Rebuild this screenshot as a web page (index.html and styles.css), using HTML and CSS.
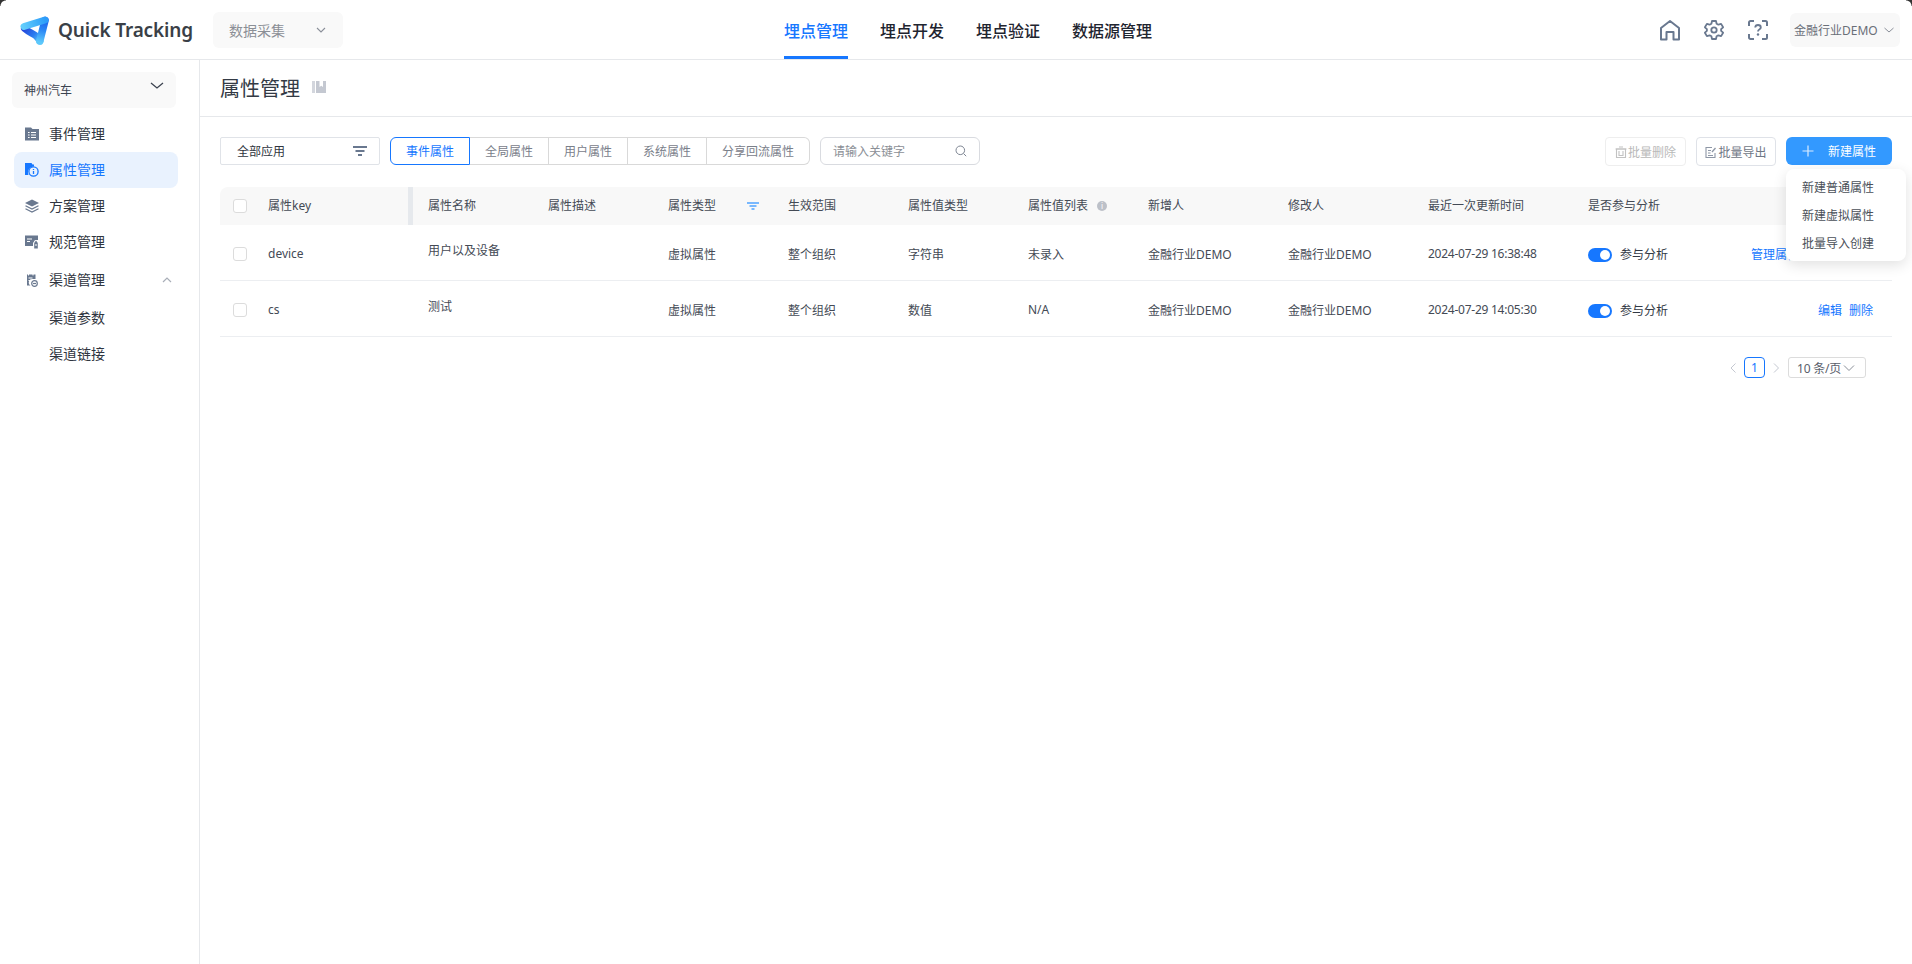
FILE: index.html
```html
<!DOCTYPE html>
<html lang="zh-CN">
<head>
<meta charset="utf-8">
<title>属性管理 - Quick Tracking</title>
<link rel="stylesheet" href="styles.css">
</head>
<body>
<header class="topbar">
  <div class="brand">
    <svg class="logo" viewBox="0 0 30 30" width="30" height="30">
      <defs>
        <linearGradient id="lg1" gradientUnits="userSpaceOnUse" x1="3" y1="12" x2="26" y2="5"><stop offset="0" stop-color="#62cdfb"/><stop offset="1" stop-color="#2c9cf9"/></linearGradient>
        <linearGradient id="lg2" gradientUnits="userSpaceOnUse" x1="25" y1="5" x2="20" y2="27"><stop offset="0" stop-color="#1f62ea"/><stop offset=".45" stop-color="#2a86f5"/><stop offset="1" stop-color="#5cc8fb"/></linearGradient>
        <linearGradient id="lg3" gradientUnits="userSpaceOnUse" x1="4" y1="12" x2="20" y2="26"><stop offset="0" stop-color="#2540d8"/><stop offset=".6" stop-color="#2b7df0"/><stop offset="1" stop-color="#5cc8fb"/></linearGradient>
      </defs>
      <path d="M4.500 13.500C9 17.500 13 18.500 15.500 20.500C17.500 22 18.500 24 20 26" fill="none" stroke="url(#lg3)" stroke-width="7" stroke-linecap="round"/>
      <path d="M25 5.500L19.800 26" fill="none" stroke="url(#lg2)" stroke-width="7.500" stroke-linecap="round"/>
      <path d="M4 11.500L25 5" fill="none" stroke="url(#lg1)" stroke-width="7" stroke-linecap="round"/>
    </svg>
    <span class="brand-name">Quick Tracking</span>
  </div>
  <div class="module-select">
    <span>数据采集</span>
    <svg class="chev" viewBox="0 0 12 12" width="12" height="12"><path d="M2 4l4 4 4-4" fill="none" stroke="#8a8f99" stroke-width="1.100"/></svg>
  </div>
  <nav class="topnav">
    <a class="topnav-item is-active">埋点管理</a>
    <a class="topnav-item">埋点开发</a>
    <a class="topnav-item">埋点验证</a>
    <a class="topnav-item">数据源管理</a>
  </nav>
  <div class="top-actions">
    <svg class="top-icon" viewBox="0 0 22 22" width="22" height="22"><path d="M2 20.500V9L11 2l9 7v11.500h-5.500V13h-7v7.500Z" fill="none" stroke="#69788f" stroke-width="2" stroke-linejoin="round"/></svg>
    <svg class="top-icon" viewBox="0 0 22 22" width="22" height="22"><path d="M9 2h4l.6 2.700 1.800 1 2.700-.8 2 3.400-2 1.900v1.600l2 1.900-2 3.400-2.700-.8-1.800 1L13 20H9l-.6-2.700-1.800-1-2.700.8-2-3.400 2-1.900v-1.600l-2-1.900 2-3.400 2.700.8 1.800-1Z" fill="none" stroke="#69788f" stroke-width="1.800" stroke-linejoin="round"/><circle cx="11" cy="11" r="2.700" fill="none" stroke="#69788f" stroke-width="1.800"/></svg>
    <svg class="top-icon top-icon-last" viewBox="0 0 22 22" width="22" height="22"><path d="M2 7V3.500C2 2.700 2.700 2 3.500 2H7M15 2h3.500c.8 0 1.500.7 1.500 1.500V7M20 15v3.500c0 .8-.7 1.500-1.500 1.500H15M7 20H3.500C2.700 20 2 19.300 2 18.500V15" fill="none" stroke="#69788f" stroke-width="2"/><path d="M8.200 8.500C8.300 6.900 9.500 6 11 6c1.600 0 2.800 1 2.800 2.400 0 2-2.800 2-2.800 4.100" fill="none" stroke="#69788f" stroke-width="1.800"/><circle cx="11" cy="15.500" r="1.200" fill="#69788f"/></svg>
    <div class="user-select">
      <span>金融行业DEMO</span>
      <svg class="chev" viewBox="0 0 12 12" width="12" height="12"><path d="M1.500 4l4.500 4 4.500-4" fill="none" stroke="#8a8f99" stroke-width="1"/></svg>
    </div>
  </div>
</header>

<div class="shell">
  <aside class="sidebar">
    <div class="project-select">
      <span>神州汽车</span>
      <svg viewBox="0 0 14 14" width="14" height="14"><path d="M1 4l6 5 6-5" fill="none" stroke="#3c4350" stroke-width="1.300"/></svg>
    </div>
    <ul class="menu">
      <li class="menu-item">
        <svg class="menu-icon" viewBox="0 0 14 14" width="14" height="14"><path d="M0 .5h6l1.500 1.500H14v11.500H0Z" fill="#69788f"/><path d="M3 5.500h1.600M6 5.500h5M3 8h1.600M6 8h5M3 10.500h1.600M6 10.500h5" stroke="#fff" stroke-width="1.100"/></svg>
        <span>事件管理</span>
      </li>
      <li class="menu-item is-active">
        <svg class="menu-icon" viewBox="0 0 14 14" width="14" height="14"><path d="M0 0h6.500l1 1.500H9v2a6 6 0 0 0-5.500 8.500H0Z" fill="#1677ff"/><circle cx="8.500" cy="8.500" r="4.600" fill="none" stroke="#1677ff" stroke-width="1.300"/><path d="M8.500 6v.9M8.500 8v3" stroke="#1677ff" stroke-width="1.300"/></svg>
        <span>属性管理</span>
      </li>
      <li class="menu-item">
        <svg class="menu-icon" viewBox="0 0 14 14" width="14" height="14"><path d="M7 .5L14 4 7 7.500 0 4Z" fill="#69788f"/><path d="M.5 6.800L7 10l6.500-3.200M.5 9.800L7 13l6.500-3.200" fill="none" stroke="#69788f" stroke-width="1.200"/></svg>
        <span>方案管理</span>
      </li>
      <li class="menu-item">
        <svg class="menu-icon" viewBox="0 0 14 14" width="14" height="14"><path d="M0 .5h13V5h-3L8 8v3H0Z" fill="#69788f"/><path d="M2 4h5M2 6.500h3" stroke="#fff" stroke-width="1.100"/><path d="M11 5.500l1.800 2.500v5.500H9.200V8Z" fill="#69788f"/><path d="M11 9v2" stroke="#fff" stroke-width="1"/></svg>
        <span>规范管理</span>
      </li>
      <li class="menu-item menu-group">
        <svg class="menu-icon" viewBox="0 0 14 14" width="14" height="14"><path d="M2 1.500h8.500V6H7.500a3.500 3.500 0 0 0-2 6.500H2Z" fill="#69788f"/><path d="M3.500 .5v2M8 .5v2M3.500 5h4M3.500 7.500H6" stroke="#fff" stroke-width="1"/><circle cx="9.500" cy="10.500" r="2.800" fill="none" stroke="#69788f" stroke-width="1.200"/><path d="M8 10.500h3" stroke="#69788f" stroke-width="1.200"/></svg>
        <span>渠道管理</span>
        <svg class="menu-arrow" viewBox="0 0 10 10" width="10" height="10"><path d="M1 7l4-4 4 4" fill="none" stroke="#a9aeb8" stroke-width="1.200"/></svg>
      </li>
      <li class="menu-item is-sub"><span>渠道参数</span></li>
      <li class="menu-item is-sub"><span>渠道链接</span></li>
    </ul>
  </aside>

  <main class="content">
    <div class="page-head">
      <h1>属性管理</h1>
      <svg viewBox="0 0 14 14" width="14" height="14"><path d="M0 1h3v12H0Z" fill="#d3d6dd"/><path d="M4 1h3.500v6l1.700-1.300L11 7V1h3v12H4Z" fill="#c4c8d1"/></svg>
    </div>
    <div class="page-body">
      <div class="toolbar">
        <div class="app-select">
          <span>全部应用</span>
          <svg viewBox="0 0 14 10" width="14" height="10"><path d="M0 1h14M2.500 5h9M5 9h4" stroke="#69788f" stroke-width="1.800"/></svg>
        </div>
        <div class="tabs">
          <span class="tab is-active">事件属性</span>
          <span class="tab">全局属性</span>
          <span class="tab">用户属性</span>
          <span class="tab">系统属性</span>
          <span class="tab tab-wide">分享回流属性</span>
        </div>
        <div class="search">
          <span>请输入关键字</span>
          <svg viewBox="0 0 12 12" width="12" height="12"><circle cx="5.300" cy="5.300" r="4.300" fill="none" stroke="#7d8592" stroke-width="1"/><path d="M8.500 8.500L11.200 11.200" stroke="#7d8592" stroke-width="1"/></svg>
        </div>
        <div class="toolbar-right">
          <button class="btn is-disabled">
            <svg viewBox="0 0 12 12" width="12" height="12"><path d="M1.500 3h9v8.500h-9Z" fill="none" stroke="#c2c2c2" stroke-width="1.100"/><path d="M.5 3h11M4 1h4M4 5v4.500h4V5" fill="none" stroke="#c2c2c2" stroke-width="1.100"/></svg>
            批量删除
          </button>
          <button class="btn">
            <svg viewBox="0 0 12 12" width="12" height="12"><path d="M7 1.500H1v10h9V7M3 4.500h3M3 7h2.500M3 9.500h5" fill="none" stroke="#8e97a6" stroke-width="1.100"/><path d="M7 6l3.500-4" stroke="#8e97a6" stroke-width="1.400"/></svg>
            批量导出
          </button>
          <div class="create-wrap">
            <button class="btn-primary">
              <svg viewBox="0 0 12 12" width="12" height="12"><path d="M6 .5v11M.5 6h11" stroke="#d9ecff" stroke-width="1.200"/></svg>
              <span>新建属性</span>
            </button>
            <ul class="dropdown">
              <li>新建普通属性</li>
              <li>新建虚拟属性</li>
              <li>批量导入创建</li>
            </ul>
          </div>
        </div>
      </div>

      <div class="table">
        <div class="row row-head">
          <div class="cell cell-key"><i class="check"></i><span>属性key</span><b class="resizer"></b></div>
          <div class="cell">属性名称</div>
          <div class="cell">属性描述</div>
          <div class="cell cell-type">属性类型
            <svg viewBox="0 0 12 8" width="12" height="8"><path d="M0 1h12M2.500 4h7M4.500 7h3" stroke="#4da3ff" stroke-width="1.500"/></svg>
          </div>
          <div class="cell">生效范围</div>
          <div class="cell">属性值类型</div>
          <div class="cell cell-list">属性值列表 <i class="info">i</i></div>
          <div class="cell">新增人</div>
          <div class="cell">修改人</div>
          <div class="cell">最近一次更新时间</div>
          <div class="cell">是否参与分析</div>
          <div class="cell"></div>
        </div>
        <div class="row">
          <div class="cell cell-key"><i class="check"></i><span>device</span></div>
          <div class="cell cell-name">用户以及设备</div>
          <div class="cell"></div>
          <div class="cell">虚拟属性</div>
          <div class="cell">整个组织</div>
          <div class="cell">字符串</div>
          <div class="cell">未录入</div>
          <div class="cell">金融行业DEMO</div>
          <div class="cell">金融行业DEMO</div>
          <div class="cell cell-time">2024-07-29 16:38:48</div>
          <div class="cell cell-switch"><i class="switch"></i>参与分析</div>
          <div class="cell cell-actions"><a>管理属性值</a><a>编辑</a><a>删除</a></div>
        </div>
        <div class="row">
          <div class="cell cell-key"><i class="check"></i><span>cs</span></div>
          <div class="cell cell-name">测试</div>
          <div class="cell"></div>
          <div class="cell">虚拟属性</div>
          <div class="cell">整个组织</div>
          <div class="cell">数值</div>
          <div class="cell">N/A</div>
          <div class="cell">金融行业DEMO</div>
          <div class="cell">金融行业DEMO</div>
          <div class="cell cell-time">2024-07-29 14:05:30</div>
          <div class="cell cell-switch"><i class="switch"></i>参与分析</div>
          <div class="cell cell-actions"><a>编辑</a><a>删除</a></div>
        </div>
      </div>

      <div class="pager">
        <svg viewBox="0 0 10 12" width="10" height="12"><path d="M7.500 1.500L3 6l4.500 4.500" fill="none" stroke="#c4c8d1" stroke-width="1"/></svg>
        <span class="page-num">1</span>
        <svg viewBox="0 0 10 12" width="10" height="12"><path d="M3 1.500L7.500 6 3 10.500" fill="none" stroke="#c4c8d1" stroke-width="1"/></svg>
        <div class="page-size">10 条/页
          <svg viewBox="0 0 12 8" width="12" height="8"><path d="M1 1.500l5 5 5-5" fill="none" stroke="#8a8f99" stroke-width="1"/></svg>
        </div>
      </div>
    </div>
  </main>
</div>
</body>
</html>
```
FILE: styles.css
```css
* { box-sizing: border-box; }
html, body { margin: 0; height: 100%; }
body {
  font-family: "Noto Sans", "Noto Sans CJK SC", sans-serif;
  font-size: 12px;
  color: #333a45;
  background: #fff;
  overflow: hidden;
}
ul { list-style: none; margin: 0; padding: 0; }
i { font-style: normal; }

.topbar {
  position: relative;
  height: 60px;
  display: flex;
  align-items: center;
  border-bottom: 1px solid #e6e8eb;
  padding: 0 12px 0 20px;
}
.topbar::before, .topbar::after {
  content: ""; position: absolute; top: 0;
  width: 6px; height: 6px;
}
.topbar::before { left: 0; background: radial-gradient(circle at 100% 100%, transparent 5px, #333 6px); }
.topbar::after { right: 0; background: radial-gradient(circle at 0 100%, transparent 5px, #333 6px); }
.brand { display: flex; align-items: center; gap: 8px; width: 193px; }
.logo { display: block; flex: none; }
.brand-name { font-size: 19px; font-weight: 600; letter-spacing: -.15px; color: #3a3f47; white-space: nowrap; line-height: 30px; }
.module-select {
  width: 130px; height: 36px;
  background: #f9f9f9;
  border-radius: 6px;
  display: flex; align-items: center; justify-content: space-between;
  padding: 0 16px;
  font-size: 14px; color: #8b8f96;
}
.topnav { display: flex; gap: 32px; margin-left: 441px; height: 59px; }
.topnav-item {
  font-size: 16px; font-weight: 500; color: #1f2530;
  line-height: 62px; height: 59px; white-space: nowrap;
}
.topnav-item.is-active { color: #1677ff; border-bottom: 3px solid #1677ff; }
.top-actions { margin-left: auto; display: flex; align-items: center; }
.top-icon { display: block; margin-right: 22px; }
.top-icon-last { margin-right: 21px; }
.user-select {
  width: 110px; height: 34px;
  background: #f8f8f8;
  border-radius: 6px;
  display: flex; align-items: center; justify-content: space-between;
  padding: 0 5px 0 4px;
  font-size: 12px; color: #6a6f78;
  white-space: nowrap;
}

.shell { display: flex; height: 904px; }
.sidebar { width: 200px; flex: none; border-right: 1px solid #e6e8eb; padding: 12px 0 0 12px; }
.project-select {
  width: 164px; height: 36px;
  background: #f9f9f9;
  border-radius: 6px;
  padding: 0 12px;
  display: flex; align-items: center; justify-content: space-between;
  color: #3c4350;
}
.project-select svg { margin-top: -8px; }
.menu { margin-top: 8px; }
.menu-item {
  width: 164px; height: 36px; margin-left: 2px;
  border-radius: 8px;
  display: flex; align-items: center;
  padding-left: 11px;
  font-size: 14px; line-height: 20px; color: #2f3540;
}
.menu-icon { flex: none; margin-right: 10px; }
.menu-item.is-active { background: #e9f2fe; color: #1677ff; }
.menu-item.menu-group { margin-top: 2px; margin-bottom: 2px; }
.menu-item.is-sub { padding-left: 35px; }
.menu-arrow { margin-left: auto; margin-right: 6px; }

.content { flex: 1; min-width: 0; }
.page-head {
  height: 57px;
  display: flex; align-items: center; gap: 12px;
  padding: 0 20px 2px;
  border-bottom: 1px solid #e6e8eb;
}
.page-head h1 { margin: 0; font-size: 20px; font-weight: 400; color: #333a45; }
.page-body { padding: 20px 20px 0 20px; }

.toolbar { display: flex; align-items: flex-start; height: 50px; font-size: 12px; }
.app-select {
  width: 160px; height: 28px;
  border: 1px solid #e0e3e8;
  border-radius: 2px;
  display: flex; align-items: center; justify-content: space-between;
  padding: 0 12px 0 16px;
  color: #2f3540;
}
.tabs { display: flex; margin-left: 10px; height: 28px; }
.tab {
  width: 79px; height: 28px;
  border: 1px solid #d9d9d9; border-left: 0;
  display: flex; align-items: center; justify-content: center;
  color: #7a808a;
}
.tab.tab-wide { width: 103px; border-radius: 0 6px 6px 0; }
.tab.is-active {
  width: 80px;
  border: 1px solid #1677ff;
  border-radius: 6px 0 0 6px;
  color: #1677ff;
}
.search {
  width: 160px; height: 28px; margin-left: 10px;
  border: 1px solid #d9dbe0; border-radius: 6px;
  display: flex; align-items: center; justify-content: space-between;
  padding: 0 12px;
  color: #8b8f96;
}
.toolbar-right { margin-left: auto; display: flex; gap: 10px; }
.btn {
  width: 80px; height: 29px;
  border: 1px solid #dfe2e8; border-radius: 4px;
  background: #fff;
  font: inherit; color: #6f7785;
  display: flex; align-items: center; justify-content: center; gap: 1px;
  padding: 0;
}
.btn.is-disabled { width: 81px; border-color: #eeeeee; color: #b9b9b9; }
.create-wrap { position: relative; }
.btn-primary {
  width: 106px; height: 28px;
  border: 0; border-radius: 6px;
  background: #3399ff;
  font: inherit; color: #fff;
  display: flex; align-items: center;
  padding: 0 0 0 16px;
}
.btn-primary span { margin-left: 14px; font-size: 12px; }
.dropdown {
  position: absolute; left: 0; top: 32px; z-index: 5;
  width: 120px; height: 92px;
  background: #fff;
  border-radius: 8px;
  box-shadow: 0 4px 14px rgba(0,0,0,.12);
  padding: 5px 16px;
  font-size: 12px; line-height: 28px; color: #4a4f58;
}

.table { width: 1672px; }
.row {
  display: grid;
  grid-template-columns: 193px 120px 120px 120px 120px 120px 120px 140px 140px 160px 160px 159px;
  height: 56px;
  padding-top: 2px;
  border-bottom: 1px solid #eceef1;
  align-items: center;
}
.row-head {
  height: 38px;
  padding-top: 0;
  background: #f8f8f8;
  border-bottom: 0;
  border-radius: 8px 0 0 0;
  align-items: stretch;
  color: #444a55;
}
.row-head .cell { line-height: 38px; }
.cell { padding-left: 15px; white-space: nowrap; min-width: 0; color: #444a55; }
.cell-key { position: relative; padding-left: 13px; display: flex; align-items: center; }
.cell-key span { margin-left: 21px; }
.check {
  width: 14px; height: 14px; flex: none;
  border: 1px solid #dcdcdc; border-radius: 3px; background: #fff;
}
.resizer { position: absolute; right: 0; top: 0; bottom: 0; width: 5px; background: #e6e9ed; }
.cell-type { display: flex; align-items: center; gap: 31px; }
.cell-list { display: flex; align-items: center; gap: 9px; }
.info {
  width: 10px; height: 10px; border-radius: 50%;
  background: #bcc0c8; color: #fff;
  font-size: 8px; line-height: 10px; text-align: center;
}
.cell-name { position: relative; top: -4px; }
.cell-time { letter-spacing: -.25px; }
.cell-switch { display: flex; align-items: center; color: #333a45; }
.switch {
  position: relative; top: 1px;
  width: 24px; height: 14px; margin-right: 8px;
  border-radius: 7px; background: #1677ff;
}
.switch::after {
  content: ""; position: absolute; right: 2px; top: 2px;
  width: 10px; height: 10px; border-radius: 50%; background: #fff;
}
.cell-actions { display: flex; justify-content: flex-end; gap: 7px; padding: 0 19px 0 0; overflow: visible; }
.cell-actions a { color: #1677ff; }

.pager {
  display: flex; align-items: center; justify-content: flex-end;
  margin-top: 20px; padding-right: 26px;
  color: #5a606b;
}
.pager svg { display: block; }
.page-num {
  width: 21px; height: 21px; margin: 0 6px;
  border: 1px solid #1677ff; border-radius: 4px;
  color: #1677ff; text-align: center; line-height: 19px;
}
.page-size {
  width: 78px; height: 21px; margin-left: 7px;
  border: 1px solid #dcdcdc; border-radius: 3px;
  display: flex; align-items: center; justify-content: space-between;
  padding: 0 10px 0 8px;
  letter-spacing: -.2px;
  white-space: nowrap;
}
```
